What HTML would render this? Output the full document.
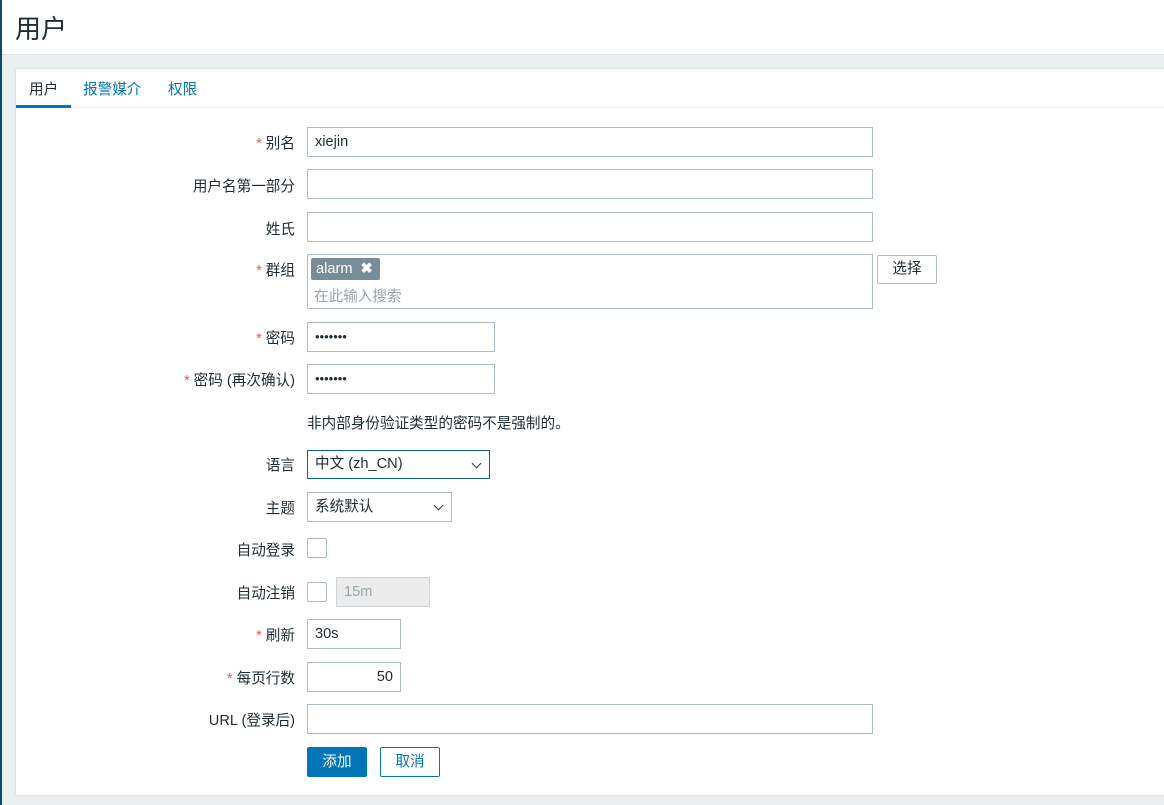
<!DOCTYPE html>
<html><head><meta charset="utf-8"><style>
*{box-sizing:border-box;margin:0;padding:0}
body{width:1164px;height:805px;background:#ebeef0;font-family:"Liberation Sans","Noto Sans CJK SC",sans-serif;font-size:14.6px;color:#1f2c33;position:relative;overflow:hidden}
.strip{position:absolute;left:0;top:0;width:2px;height:805px;background:#0e4a6e}
.hdr{position:absolute;left:2px;top:0;right:0;height:55px;background:#fff;border-bottom:1px solid #dfe4e7}
.hdr h1{position:absolute;left:13px;top:9px;font-size:26px;font-weight:normal;color:#1f2c33}
.card{position:absolute;left:15px;top:68px;width:1160px;height:728px;background:#fff;border:1px solid #dfe4e7}
.tabs{position:absolute;left:0;top:0;right:0;height:39px;border-bottom:1px solid #ebeef0}
.tab{position:absolute;top:9px;color:#0275b8}
.tab.a{color:#1f2c33}
.ul{position:absolute;left:0;top:36px;width:55px;height:3px;background:#0275b8}
.l{position:absolute;right:869px;text-align:right;white-space:nowrap}
.l i{font-style:normal;color:#e45959;margin-right:4px}
.in{position:absolute;left:307px;height:30px;border:1px solid #acbbc4;background:#fff;padding:0 7px;line-height:28px;white-space:nowrap}
.abs{position:absolute}
.cb{position:absolute;left:307px;width:20px;height:20px;border:1px solid #acbbc4;border-radius:2px}
.chev{position:absolute;right:9px;top:9px;width:7px;height:7px;border-right:1.3px solid #333;border-bottom:1.3px solid #333;transform:rotate(45deg)}
.dots{font-size:13px}
</style></head><body>
<div class="strip"></div>
<div class="hdr"><h1>用户</h1></div>
<div class="card">
<div class="tabs">
<span class="tab a" style="left:13px">用户</span>
<span class="tab" style="left:67px">报警媒介</span>
<span class="tab" style="left:152px">权限</span>
<div class="ul"></div>
</div>
</div>
<div class="l" style="top:132px"><i>*</i>别名</div>
<div class="in" style="top:127px;width:566px">xiejin</div>
<div class="l" style="top:175px">用户名第一部分</div>
<div class="in" style="top:169px;width:566px"></div>
<div class="l" style="top:218px">姓氏</div>
<div class="in" style="top:212px;width:566px"></div>
<div class="l" style="top:259px"><i>*</i>群组</div>
<div class="in" style="top:254px;width:566px;height:55px"></div>
<div class="abs" style="left:311px;top:258px;width:69px;height:22px;background:#768d99;border-radius:2px;color:#fff;padding-left:5px;line-height:22px">alarm <b style="margin-left:4px">✖</b></div>
<div class="abs" style="left:314px;top:285px;color:#9aa5ab">在此输入搜索</div>
<div class="abs" style="left:877px;top:255px;width:60px;height:29px;border:1px solid #acbbc4;border-radius:2px;text-align:center;line-height:27px">选择</div>
<div class="l" style="top:327px"><i>*</i>密码</div>
<div class="in dots" style="top:322px;width:188px">•••••••</div>
<div class="l" style="top:369px"><i>*</i>密码 (再次确认)</div>
<div class="in dots" style="top:364px;width:188px">•••••••</div>
<div class="abs" style="left:307px;top:412px">非内部身份验证类型的密码不是强制的。</div>
<div class="l" style="top:454px">语言</div>
<div class="in" style="top:450px;width:183px;height:29px;border-color:#0e5f94;line-height:27px">中文 (zh_CN)<span class="chev"></span></div>
<div class="l" style="top:497px">主题</div>
<div class="in" style="top:492px;width:145px;height:30px">系统默认<span class="chev"></span></div>
<div class="l" style="top:539px">自动登录</div>
<div class="cb" style="top:538px"></div>
<div class="l" style="top:582px">自动注销</div>
<div class="cb" style="top:582px"></div>
<div class="in" style="left:336px;top:577px;width:94px;background:#ebebeb;border-color:#cfd6da;color:#9aa5ab">15m</div>
<div class="l" style="top:624px"><i>*</i>刷新</div>
<div class="in" style="top:619px;width:94px">30s</div>
<div class="l" style="top:667px"><i>*</i>每页行数</div>
<div class="in" style="top:662px;width:94px;text-align:right">50</div>
<div class="l" style="top:709px">URL (登录后)</div>
<div class="in" style="top:704px;width:566px"></div>
<div class="abs" style="left:307px;top:747px;width:60px;height:30px;background:#0275b8;color:#fff;border-radius:2px;text-align:center;line-height:30px">添加</div>
<div class="abs" style="left:380px;top:747px;width:60px;height:30px;border:1px solid #0275b8;color:#0275b8;border-radius:2px;text-align:center;line-height:28px">取消</div>
</body></html>
